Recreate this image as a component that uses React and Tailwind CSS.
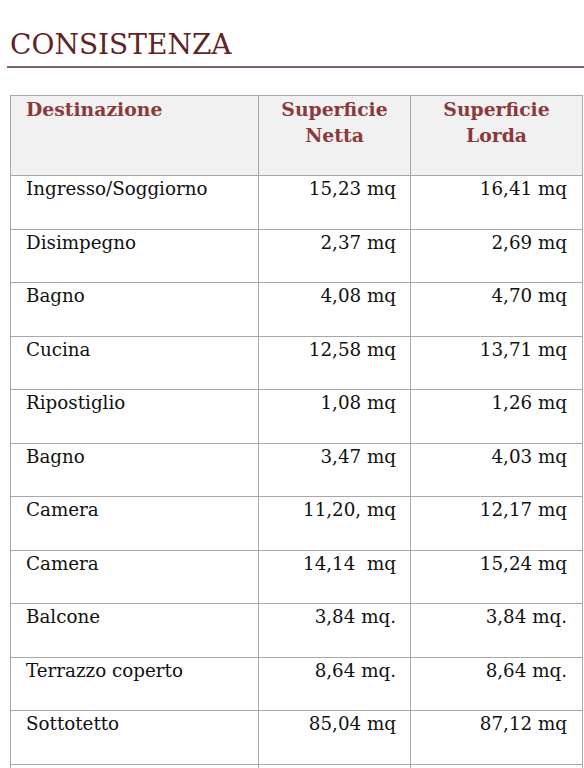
import React from 'react';

const rows = [
  ['Ingresso/Soggiorno', '15,23 mq', '16,41 mq'],
  ['Disimpegno', '2,37 mq', '2,69 mq'],
  ['Bagno', '4,08 mq', '4,70 mq'],
  ['Cucina', '12,58 mq', '13,71 mq'],
  ['Ripostiglio', '1,08 mq', '1,26 mq'],
  ['Bagno', '3,47 mq', '4,03 mq'],
  ['Camera', '11,20, mq', '12,17 mq'],
  ['Camera', '14,14\u00a0 mq', '15,24 mq'],
  ['Balcone', '3,84 mq.', '3,84 mq.'],
  ['Terrazzo coperto', '8,64 mq.', '8,64 mq.'],
  ['Sottotetto', '85,04 mq', '87,12 mq'],
  ['', '', ''],
];

const App = () => {
  return (
    <div className="w-[584px] h-[768px] overflow-hidden bg-white font-['DejaVu_Serif',serif]">
      {/* Section title */}
      <div className="pl-[7px] pt-[28px]">
        <h1 className="pl-[3px] text-[28px] leading-[34px] text-[#5e2426]">
          CONSISTENZA
        </h1>
        <div className="mt-[4px] h-[2px] bg-[#7d6565]" />
      </div>

      {/* Table */}
      <table className="mt-[27px] ml-[10px] w-[572px] border-collapse table-fixed">
        <colgroup>
          <col className="w-[248px]" />
          <col className="w-[152px]" />
          <col className="w-[172px]" />
        </colgroup>
        <thead>
          <tr className="h-[80px] bg-[#f1f1f1] text-[#8a3a3c] font-bold text-[18.8px] leading-[26px]">
            <th className="border border-[#a8a8a8] align-top text-left pl-[15px] pt-[0px] font-bold">
              Destinazione
            </th>
            <th className="border border-[#a8a8a8] align-top text-center pt-[0px] font-bold">
              Superficie
              <br />
              Netta
            </th>
            <th className="border border-[#a8a8a8] align-top text-center pt-[0px] font-bold">
              Superficie
              <br />
              Lorda
            </th>
          </tr>
        </thead>
        <tbody className="text-[18.3px] leading-[26px] text-[#111]">
          {rows.map((row, i) => (
            <tr key={i} className="h-[53.5px]">
              <td className="border border-[#a8a8a8] align-top pl-[15px] pt-[0px] whitespace-pre">
                {row[0]}
              </td>
              <td className="border border-[#a8a8a8] align-top text-right pr-[14px] pt-[0px] whitespace-pre">
                {row[1]}
              </td>
              <td className="border border-[#a8a8a8] align-top text-right pr-[15px] pt-[0px] whitespace-pre">
                {row[2]}
              </td>
            </tr>
          ))}
        </tbody>
      </table>
    </div>
  );
};

export default App;
